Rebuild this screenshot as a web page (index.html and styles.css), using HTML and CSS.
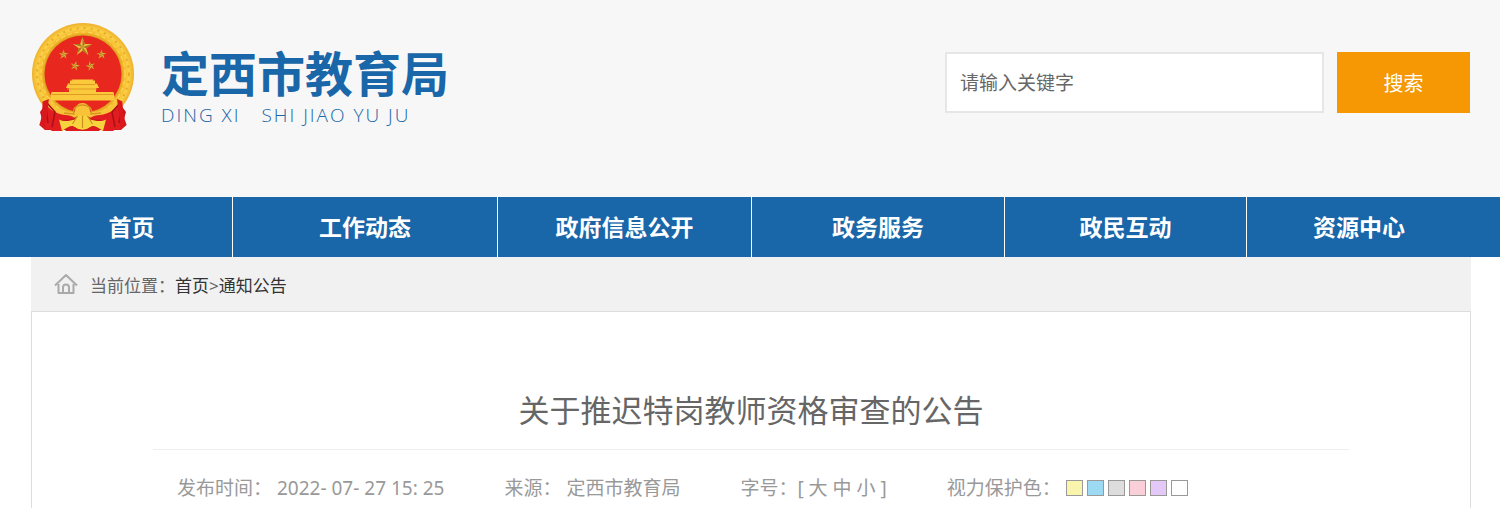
FILE: index.html
```
<!DOCTYPE html>
<html lang="zh-CN">
<head>
    <meta charset="UTF-8">
    <meta name="viewport" content="width=device-width, initial-scale=1.0">
    <title>关于推迟特岗教师资格审查的公告</title>
    <link rel="stylesheet" href="styles.css">
</head>
<body>
    <header class="header">
        <div class="container header-inner">
            <a href="#" class="logo">
                <svg class="emblem" viewBox="12 12 104 111" aria-hidden="true">
                    <defs>
                        <radialGradient id="gold" cx="64" cy="64" r="51" gradientUnits="userSpaceOnUse">
                            <stop offset="0.75" stop-color="#d99a1c"/>
                            <stop offset="0.8" stop-color="#f3b62a"/>
                            <stop offset="0.9" stop-color="#fbd045"/>
                            <stop offset="1" stop-color="#eeb02c"/>
                        </radialGradient>
                        <path id="star" d="M0-10 2.3-3.1 9.5-3.1 3.7 1.2 5.9 8.1 0 3.8-5.9 8.1-3.7 1.2-9.5-3.1-2.3-3.1Z"/>
                        <path id="star-shade" d="M0-10 2.3-3.1 0 0ZM9.5-3.1 3.7 1.2 0 0ZM5.9 8.1 0 3.8 0 0ZM-5.9 8.1-3.7 1.2 0 0ZM-9.5-3.1-2.3-3.1 0 0Z"/>
                    </defs>
                    <circle cx="64" cy="64" r="51" fill="url(#gold)"/>
                    <circle cx="64" cy="64" r="46" fill="none" stroke="#e9a92b" stroke-width="2" stroke-dasharray="2 5"/>
                    <circle cx="64" cy="64" r="42" fill="none" stroke="#ffdf63" stroke-width="1" stroke-dasharray="4 3"/>
                    <circle cx="64" cy="64" r="38.5" fill="#e8281e"/>
                    <g fill="#efbd45">
                        <use href="#star" transform="translate(63.5 37)"/>
                        <use href="#star" transform="translate(44.5 44.5) scale(.5)"/>
                        <use href="#star" transform="translate(82.5 44.5) scale(.5)"/>
                        <use href="#star" transform="translate(56 56) rotate(15) scale(.48)"/>
                        <use href="#star" transform="translate(71.5 56) rotate(-15) scale(.48)"/>
                    </g>
                    <g fill="#a8741c">
                        <use href="#star-shade" transform="translate(63.5 37)"/>
                        <use href="#star-shade" transform="translate(44.5 44.5) scale(.5)"/>
                        <use href="#star-shade" transform="translate(82.5 44.5) scale(.5)"/>
                        <use href="#star-shade" transform="translate(56 56) rotate(15) scale(.48)"/>
                        <use href="#star-shade" transform="translate(71.5 56) rotate(-15) scale(.48)"/>
                    </g>
                    <path d="M51 70.5h2.5l-1-1h22l-1 1H76v3h2l2 4.5h-3v4h17.5l1.5 8.5H31L32.500 82H50v-4h-3l2-4.500h2Z" fill="#fbc93c"/>
                    <path d="M50 74.500h26M48 79h30M33 84.500h61" stroke="#e09a25" stroke-width="1" fill="none"/>
                    <path d="M29 91c9 10 17 14 35 14s27-4 35-14l8 11-5 18H26l-5-18Z" fill="#c9171d"/>
                    <path d="M28 89c9 10 16 13 28 13 0-6 3-9 7.500-9S71 96 71 102c12 0 20-3 28-13l3 11c-8 6-18 9-30 8-5-3-12-3-17 0-12 1-22-2-30-8Z" fill="#f8c337"/>
                    <path d="m45 103 10 1c-2-6 3-9 8.500-9s10.500 3 8.500 9l10-1" stroke="#d99324" stroke-width="1.500" fill="none"/>
                    <path d="M25 91c4 8 12 13 21 14 4 0 7 1 10 3-5 2-11 2-16 2l4 11H33l-3-2-4 1-2-5Zm77 0c-4 8-12 13-21 14-4 0-7 1-10 3 5 2 11 2 16 2l-4 11h11l3-2 4 1 2-5Z" fill="#e11d1f"/>
                    <path d="m28 93 8 9-3 15m-6-19 2 15m72-20-8 9 3 15m6-19-2 15" stroke="#a90f16" stroke-width="1.500" fill="none"/>
                    <path d="M40 109.500c6 3 11 1 16 0l3-4h9l3 4c5 1 10 3 16 0l-3 11.500c-4-3-7-5-11-5-5 5-14 5-19 0-4 0-7 2-11 5Z" fill="#f7d33d"/>
                    <path d="M63.500 106v12m-5-12-5 8m15-8 5 8" stroke="#d08d20" stroke-width="1.200"/>
                    <path d="M46 121c3-4 7-5 10-4 4 4 11 4 15 0 3-1 7 0 10 4Z" fill="#dd1b1e"/>
                    <path d="M21.500 91.500 28 89l-4 31-6-5c3-7 3-15 3.500-23.500Zm83 0L99 89l4 31 6-5c-3-7-4-15-4.500-23.500Z" fill="#d9181d" transform="translate(3 0) scale(.96 1)"/>
                </svg>
                <span class="logo-text">
                    <span class="logo-name">定西市教育局</span>
                    <span class="logo-pinyin">DING XI &nbsp; SHI JIAO YU JU</span>
                </span>
            </a>
            <form class="search" action="#">
                <input type="text" class="search-input" placeholder="请输入关键字" aria-label="请输入关键字">
                <button type="submit" class="search-button">搜索</button>
            </form>
        </div>
    </header>

    <nav class="nav">
        <div class="container nav-inner">
            <a href="#" class="nav-link">首页</a>
            <a href="#" class="nav-link">工作动态</a>
            <a href="#" class="nav-link">政府信息公开</a>
            <a href="#" class="nav-link">政务服务</a>
            <a href="#" class="nav-link">政民互动</a>
            <a href="#" class="nav-link">资源中心</a>
        </div>
    </nav>

    <main class="container main">
        <div class="breadcrumb">
            <svg class="home-icon" viewBox="0 0 24 22" aria-hidden="true">
                <path d="M1 12.500 12 2l11 10.500M4.500 11v9h15v-9M9 20v-5.500a3 3 0 0 1 6 0V20"/>
            </svg>
            <span>当前位置：<a href="#">首页</a>&gt;<a href="#">通知公告</a></span>
        </div>

        <article class="article">
            <h1 class="article-title">关于推迟特岗教师资格审查的公告</h1>
            <div class="article-meta">
                <span>发布时间： 2022- 07- 27 15: 25</span>
                <span>来源： 定西市教育局</span>
                <span>字号：[ <a href="#">大</a> <a href="#">中</a> <a href="#">小</a> ]</span>
                <span class="eye-colors">视力保护色：
                    <span class="swatches">
                        <button type="button" class="swatch yellow" aria-label="黄色"></button>
                        <button type="button" class="swatch blue" aria-label="蓝色"></button>
                        <button type="button" class="swatch gray" aria-label="灰色"></button>
                        <button type="button" class="swatch pink" aria-label="粉色"></button>
                        <button type="button" class="swatch purple" aria-label="紫色"></button>
                        <button type="button" class="swatch white" aria-label="白色"></button>
                    </span>
                </span>
            </div>
        </article>
    </main>
</body>
</html>
```

FILE: styles.css
```
* {
    box-sizing: border-box;
}

body {
    margin: 0;
    min-height: 100vh;
    display: flex;
    flex-direction: column;
    background: #fff;
    color: #666;
    font-family: "Noto Sans", "Noto Sans CJK SC", sans-serif;
}

a {
    color: inherit;
    text-decoration: none;
}

.container {
    margin: 0 29px 0 31px;
}

/* Header */
.header {
    background: #f7f7f7;
    padding: 22px 0 64px;
}

.header-inner {
    display: flex;
    justify-content: space-between;
    align-items: flex-start;
}

.logo {
    display: flex;
    gap: 26px;
    color: #1966a8;
}

.emblem {
    width: 104px;
    height: 111px;
}

.logo-text {
    display: flex;
    flex-direction: column;
    padding-top: 24px;
}

.logo-name {
    font-size: 48px;
    font-weight: bold;
    line-height: 56px;
}

.logo-pinyin {
    font-family: "Open Sans", sans-serif;
    font-size: 19px;
    font-weight: 300;
    line-height: 26px;
    letter-spacing: 2px;
}

.search {
    display: flex;
    gap: 13px;
    padding-top: 30px;
    margin-right: 1px;
}

.search-input {
    width: 379px;
    height: 61px;
    padding: 0 13px;
    border: 2px solid #e6e6e6;
    background: #fff;
    color: #666;
    font-family: inherit;
    font-size: 19px;
}

.search-input::placeholder {
    color: #666;
    opacity: 1;
}

.search-button {
    width: 133px;
    height: 61px;
    border: 0;
    padding: 0;
    background: #f59804;
    color: #fff;
    font-family: inherit;
    font-size: 20px;
}

/* Navigation */
.nav {
    background: #1966a8;
}

.nav-inner {
    display: grid;
    grid-template-columns: 202fr 265fr 254fr 253fr 242fr 224fr;
}

.nav-link {
    border-right: 1px solid #fff;
    color: #fff;
    font-size: 23px;
    font-weight: bold;
    line-height: 60px;
    text-align: center;
}

.nav-link:last-child {
    border-right: 0;
}

/* Content */
.main {
    flex: 1;
    display: flex;
    flex-direction: column;
}

.breadcrumb {
    display: flex;
    align-items: center;
    gap: 12px;
    height: 54px;
    padding: 0 23px;
    background: #f1f1f1;
    font-size: 17px;
}

.breadcrumb a {
    color: #333;
}

.home-icon {
    width: 24px;
    height: 22px;
    fill: none;
    stroke: #aaa;
    stroke-width: 2;
    stroke-linejoin: round;
}

.article {
    flex: 1;
    border: 1px solid #ddd;
    border-bottom: 0;
    padding: 74px 121px 0;
}

.article-title {
    margin: 0;
    padding-bottom: 15px;
    border-bottom: 1px solid #eee;
    font-size: 31px;
    font-weight: normal;
    line-height: 48px;
    text-align: center;
}

.article-meta {
    display: flex;
    gap: 60px;
    padding: 24px;
    color: #999;
    font-size: 19px;
    line-height: 28px;
}

.eye-colors {
    display: flex;
    align-items: center;
}

.swatches {
    display: flex;
    gap: 4px;
    margin-left: 5px;
}

.swatch {
    width: 17px;
    height: 16px;
    padding: 0;
    border: 1px solid #999;
}

.yellow {
    background: #faf5ac;
}

.blue {
    background: #9cdaf4;
}

.gray {
    background: #ddd;
}

.pink {
    background: #f9d0d8;
}

.purple {
    background: #e3c8f8;
}

.white {
    background: #fff;
}
```
